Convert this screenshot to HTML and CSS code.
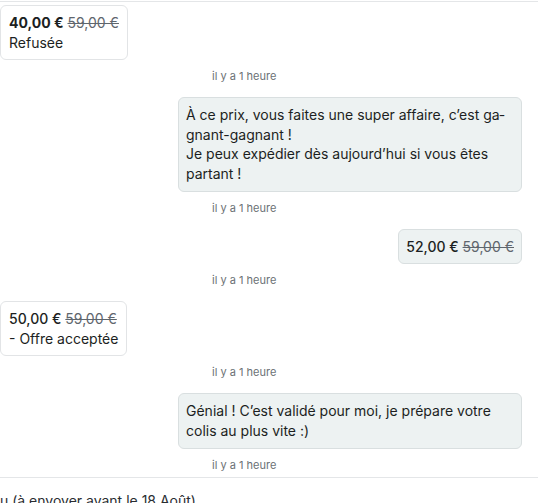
FILE: index.html
```html
<!DOCTYPE html>
<html lang="fr">
<head>
<meta charset="utf-8">
<title>Conversation</title>
<link rel="stylesheet" href="styles.css">
</head>
<body>
<div class="thread">
  <div class="msg msg-left">
    <div class="offer">
      <div><span class="price price-bold">40,00 €</span> <span class="old">59,00 €</span></div>
      <div>Refusée</div>
    </div>
    <div class="meta">il y a 1 heure</div>
  </div>

  <div class="msg msg-right">
    <div class="bubble">À ce prix, vous faites une super affaire, c’est ga&shy;gnant-gagnant !<br>Je peux expédier dès aujourd’hui si vous êtes partant !</div>
    <div class="meta">il y a 1 heure</div>
  </div>

  <div class="msg msg-right">
    <div class="bubble"><span class="price">52,00 €</span> <span class="old">59,00 €</span></div>
    <div class="meta">il y a 1 heure</div>
  </div>

  <div class="msg msg-left">
    <div class="offer">
      <div><span class="price">50,00 €</span> <span class="old">59,00 €</span></div>
      <div>- Offre acceptée</div>
    </div>
    <div class="meta">il y a 1 heure</div>
  </div>

  <div class="msg msg-right">
    <div class="bubble">Génial ! C’est validé pour moi, je prépare votre colis au plus vite :)</div>
    <div class="meta">il y a 1 heure</div>
  </div>
</div>
<div class="footer">u (à envoyer avant le 18 Août)</div>
</body>
</html>
```

FILE: styles.css
```css
* { box-sizing: border-box; }
html, body { margin: 0; padding: 0; background: #ffffff; overflow: hidden; }
body {
  font-family: Inter, "Noto Sans", "Liberation Sans", sans-serif;
  font-size: 14px;
  line-height: 19.6px;
  color: #1c1f22;
}
.thread {
  margin-top: 1px;
  border-top: 1px solid #e4e6e8;
  padding: 3px 16px 0 0;
  display: flex;
  flex-direction: column;
}
.msg {
  display: flex;
  flex-direction: column;
  margin-bottom: 13px;
}
.msg:last-child { margin-bottom: 0; }
.msg-left { align-items: flex-start; }
.msg-right { align-items: flex-end; }
.offer {
  border: 1px solid #e2e4e6;
  border-radius: 6px;
  background: #ffffff;
  padding: 7px 8px;
  white-space: nowrap;
}
.bubble {
  border: 1px solid #d9dfe0;
  border-radius: 6px;
  background: #edf2f2;
  padding: 7px 7px;
  max-width: 344px;
}
.price { font-weight: 500; }
.price-bold { font-weight: 700; }
.old {
  color: #5f666d;
  text-decoration: line-through;
}
.meta {
  align-self: stretch;
  padding-left: 212px;
  margin-top: 8px;
  font-size: 11px;
  line-height: 16px;
  color: #6b7175;
}
.footer {
  margin-top: 4px;
  border-top: 1px solid #e4e6e8;
  padding-top: 13px;
  white-space: nowrap;
  color: #2a2d31;
}
```
